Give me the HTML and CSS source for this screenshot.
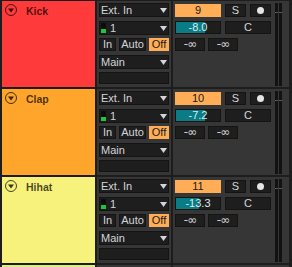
FILE: index.html
```html
<!DOCTYPE html>
<html lang="en">
<head>
  <meta charset="UTF-8" />
  <title>Mixer Tracks</title>
  <link rel="stylesheet" href="styles.css">
</head>
<body>
  <div class="track">
    <div class="head kick">
      <svg class="fold" width="12" height="12" viewBox="0 0 12 12"><circle cx="6" cy="6" r="5.5" /><polygon points="3,4.5 9,4.5 6,8.5" /></svg>
      <span class="name">Kick</span>
    </div>
    <div class="io">
      <div class="box select"><span>Ext. In</span><svg width="7" height="5"><polygon points="0,0 7,0 3.5,5" /></svg></div>
      <div class="box select ch"><span><i class="lvl"></i>1</span><svg width="7" height="5"><polygon points="0,0 7,0 3.5,5" /></svg></div>
      <div class="mon">
        <div class="box btn in">In</div>
        <div class="box btn auto">Auto</div>
        <div class="box btn off on">Off</div>
      </div>
      <div class="box select out"><span>Main</span><svg width="7" height="5"><polygon points="0,0 7,0 3.5,5" /></svg></div>
      <div class="box empty"></div>
    </div>
    <div class="mixer">
      <div class="ctrls">
        <div class="row">
          <div class="box num">9</div>
          <div class="box sq">S</div>
          <div class="box sq"><i class="dot"></i></div>
        </div>
        <div class="row">
          <div class="box vol" style="--v: 65%">-8.0</div>
          <div class="box pan">C</div>
        </div>
        <div class="row sends">
          <div class="box send">-∞</div>
          <div class="box send">-∞</div>
        </div>
      </div>
      <div class="meter"><i></i><i></i></div>
    </div>
  </div>

  <div class="track">
    <div class="head clap">
      <svg class="fold" width="12" height="12" viewBox="0 0 12 12"><circle cx="6" cy="6" r="5.5" /><polygon points="3,4.5 9,4.5 6,8.5" /></svg>
      <span class="name">Clap</span>
    </div>
    <div class="io">
      <div class="box select"><span>Ext. In</span><svg width="7" height="5"><polygon points="0,0 7,0 3.5,5" /></svg></div>
      <div class="box select ch"><span><i class="lvl"></i>1</span><svg width="7" height="5"><polygon points="0,0 7,0 3.5,5" /></svg></div>
      <div class="mon">
        <div class="box btn in">In</div>
        <div class="box btn auto">Auto</div>
        <div class="box btn off on">Off</div>
      </div>
      <div class="box select out"><span>Main</span><svg width="7" height="5"><polygon points="0,0 7,0 3.5,5" /></svg></div>
      <div class="box empty"></div>
    </div>
    <div class="mixer">
      <div class="ctrls">
        <div class="row">
          <div class="box num">10</div>
          <div class="box sq">S</div>
          <div class="box sq"><i class="dot"></i></div>
        </div>
        <div class="row">
          <div class="box vol" style="--v: 65%">-7.2</div>
          <div class="box pan">C</div>
        </div>
        <div class="row sends">
          <div class="box send">-∞</div>
          <div class="box send">-∞</div>
        </div>
      </div>
      <div class="meter"><i></i><i></i></div>
    </div>
  </div>

  <div class="track">
    <div class="head hihat">
      <svg class="fold" width="12" height="12" viewBox="0 0 12 12"><circle cx="6" cy="6" r="5.5" /><polygon points="3,4.5 9,4.5 6,8.5" /></svg>
      <span class="name">Hihat</span>
    </div>
    <div class="io">
      <div class="box select"><span>Ext. In</span><svg width="7" height="5"><polygon points="0,0 7,0 3.5,5" /></svg></div>
      <div class="box select ch"><span><i class="lvl"></i>1</span><svg width="7" height="5"><polygon points="0,0 7,0 3.5,5" /></svg></div>
      <div class="mon">
        <div class="box btn in">In</div>
        <div class="box btn auto">Auto</div>
        <div class="box btn off on">Off</div>
      </div>
      <div class="box select out"><span>Main</span><svg width="7" height="5"><polygon points="0,0 7,0 3.5,5" /></svg></div>
      <div class="box empty"></div>
    </div>
    <div class="mixer">
      <div class="ctrls">
        <div class="row">
          <div class="box num">11</div>
          <div class="box sq">S</div>
          <div class="box sq"><i class="dot"></i></div>
        </div>
        <div class="row">
          <div class="box vol" style="--v: 52%">-13.3</div>
          <div class="box pan">C</div>
        </div>
        <div class="row sends">
          <div class="box send">-∞</div>
          <div class="box send">-∞</div>
        </div>
      </div>
      <div class="meter"><i></i><i></i></div>
    </div>
  </div>

  <div class="track stub">
    <div class="head next"></div>
    <div class="io"></div>
    <div class="mixer"></div>
  </div>
</body>
</html>
```

FILE: styles.css
```css
:root {
  --bg: #1d1d1d;
  --panel: #363636;
  --ctl: #1e1e1e;
  --edge: #141414;
  --fg: #d4d4d8;
  --orange: #ffad56;
  --teal: #0a7c86;
}

* {
  box-sizing: border-box;
}

body {
  margin: 0;
  padding: 1px 0 0 2px;
  width: 292px;
  height: 267px;
  overflow: hidden;
  background: var(--bg);
  color: var(--fg);
  font-family: 'Liberation Sans', Arial, sans-serif;
  font-size: 11px;
}

.track {
  display: grid;
  grid-template-columns: 93px 74px 116px;
  column-gap: 2px;
  height: 86px;
  margin-bottom: 2px;
}

.track.stub {
  height: 2px;
  margin-bottom: 0;
}

/* track title */
.head {
  display: flex;
  align-items: flex-start;
  gap: 9px;
  padding: 3px 0 0 3px;
}

.kick { background: #ff3a3a; }
.clap { background: #ffa52c; }
.hihat { background: #f7f27c; }
.next { background: #d8f07e; }

.fold circle {
  fill: none;
  stroke: rgba(0, 0, 0, 0.72);
  stroke-width: 1;
}

.fold polygon {
  fill: rgba(0, 0, 0, 0.78);
}

.name {
  font-size: 10.5px;
  font-weight: bold;
  line-height: 12px;
  margin-top: 1px;
  color: rgba(0, 0, 0, 0.72);
}

/* in / out section */
.io {
  background: var(--panel);
  display: flex;
  flex-direction: column;
  padding: 2px 2px 0;
}

.box {
  background: var(--ctl);
  border: 1px solid var(--edge);
  height: 13px;
  line-height: 11px;
}

.select {
  display: flex;
  align-items: center;
  justify-content: space-between;
  height: 14px;
  line-height: 12px;
  padding: 0 1px 0 1px;
}

.select svg polygon {
  fill: var(--fg);
}

.ch {
  margin-top: 4px;
}

.ch span {
  display: flex;
  align-items: center;
}

.lvl {
  display: block;
  width: 5px;
  height: 10px;
  margin-right: 4px;
  background: linear-gradient(#0c0c0c 0 6px, #1fc43a 6px);
}

.mon {
  display: flex;
  gap: 3px;
  margin-top: 3px;
}

.btn {
  text-align: center;
}

.in { width: 17px; }
.auto { width: 27px; }
.off { width: 20px; }

.on {
  background: var(--orange);
  border-color: var(--orange);
  color: #1a1a1a;
}

.out {
  margin-top: 4px;
}

.empty {
  margin-top: 3px;
  height: 12px;
}

/* mixer section */
.mixer {
  background: var(--panel);
  display: flex;
  padding: 3px 0 0 2px;
}

.ctrls {
  width: 96px;
  display: flex;
  flex-direction: column;
  gap: 4px;
}

.row {
  display: flex;
  gap: 4px;
}

.row .box {
  text-align: center;
}

.num {
  width: 46px;
  background: var(--orange);
  border-color: var(--orange);
  color: #1a1a1a;
}

.sq {
  width: 21px;
  display: flex;
  align-items: center;
  justify-content: center;
}

.dot {
  display: block;
  width: 7px;
  height: 7px;
  border-radius: 50%;
  background: #e4e4e4;
}

.vol {
  width: 46px;
  color: #dcecee;
  background: linear-gradient(to right, var(--teal) var(--v), var(--ctl) var(--v));
}

.pan {
  width: 46px;
}

.sends {
  gap: 3px;
}

.send {
  width: 30px;
  font-family: 'DejaVu Sans', sans-serif;
  font-size: 12px;
  letter-spacing: -1px;
}

.meter {
  display: flex;
  gap: 1px;
  width: 7px;
  height: 83px;
  margin: -1px 0 0 4px;
}

.meter i {
  display: block;
  width: 3px;
  background: linear-gradient(#121212 0 9px, #5a5a5a 9px 10px, #121212 10px);
}
```
